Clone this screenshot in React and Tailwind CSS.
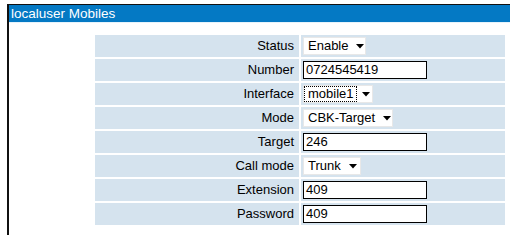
import React from "react";

const font = { fontFamily: '"Liberation Sans", Arial, sans-serif' };

function Arrow() {
  return (
    <svg width="8" height="5" viewBox="0 0 8 5" className="shrink-0">
      <path d="M0 0 H8 L4 4.5 Z" fill="#000" />
    </svg>
  );
}

function Select({ value, width, focus }) {
  return (
    <div
      className="h-[18px] bg-white flex items-center gap-[6px] pl-[1px] pr-[5px] border border-[#e8e8e8] whitespace-nowrap"
      style={{ width }}
    >
      <span
        className={
          "leading-[14px] pl-[3px] pr-[2px] " +
          (focus ? "outline-1 outline-dotted outline-black" : "")
        }
      >
        {value}
      </span>
      <span className="ml-auto flex items-center">
        <Arrow />
      </span>
    </div>
  );
}

function Input({ value }) {
  return (
    <div className="h-[18px] w-[124px] bg-white border border-black flex items-center pl-[2px] leading-[14px]">
      {value}
    </div>
  );
}

const rows = [
  ["Status", <Select value="Enable" width={63} />],
  ["Number", <Input value="0724545419" />],
  ["Interface", <Select value="mobile1" width={70} focus />],
  ["Mode", <Select value="CBK-Target" width={90} />],
  ["Target", <Input value="246" />],
  ["Call mode", <Select value="Trunk" width={58} />],
  ["Extension", <Input value="409" />],
  ["Password", <Input value="409" />],
];

export default function App() {
  return (
    <div className="w-[510px] h-[235px] bg-white pt-[4px] pl-[7px] overflow-hidden text-[13px] text-black" style={font}>
      <div className="h-[231px] border-l-2 border-t border-[#111] w-[520px]">
        <div className="h-[18px] bg-[#0479c4] text-white pl-[2px] leading-[17px] border-b border-[#e6f3fb] text-[13.5px]">
          localuser Mobiles
        </div>
        <div className="pl-[86px] pt-[12px] flex flex-col gap-[2px]">
          {rows.map(([label, ctrl]) => (
            <div key={label} className="flex gap-[2px]">
              <div className="w-[204px] h-[22px] bg-[#d5e3ee] flex items-center justify-end pr-[5px]">
                {label}
              </div>
              <div className="w-[204px] h-[22px] bg-[#d5e3ee] flex items-center pl-[2px]">
                {ctrl}
              </div>
            </div>
          ))}
        </div>
      </div>
    </div>
  );
}
